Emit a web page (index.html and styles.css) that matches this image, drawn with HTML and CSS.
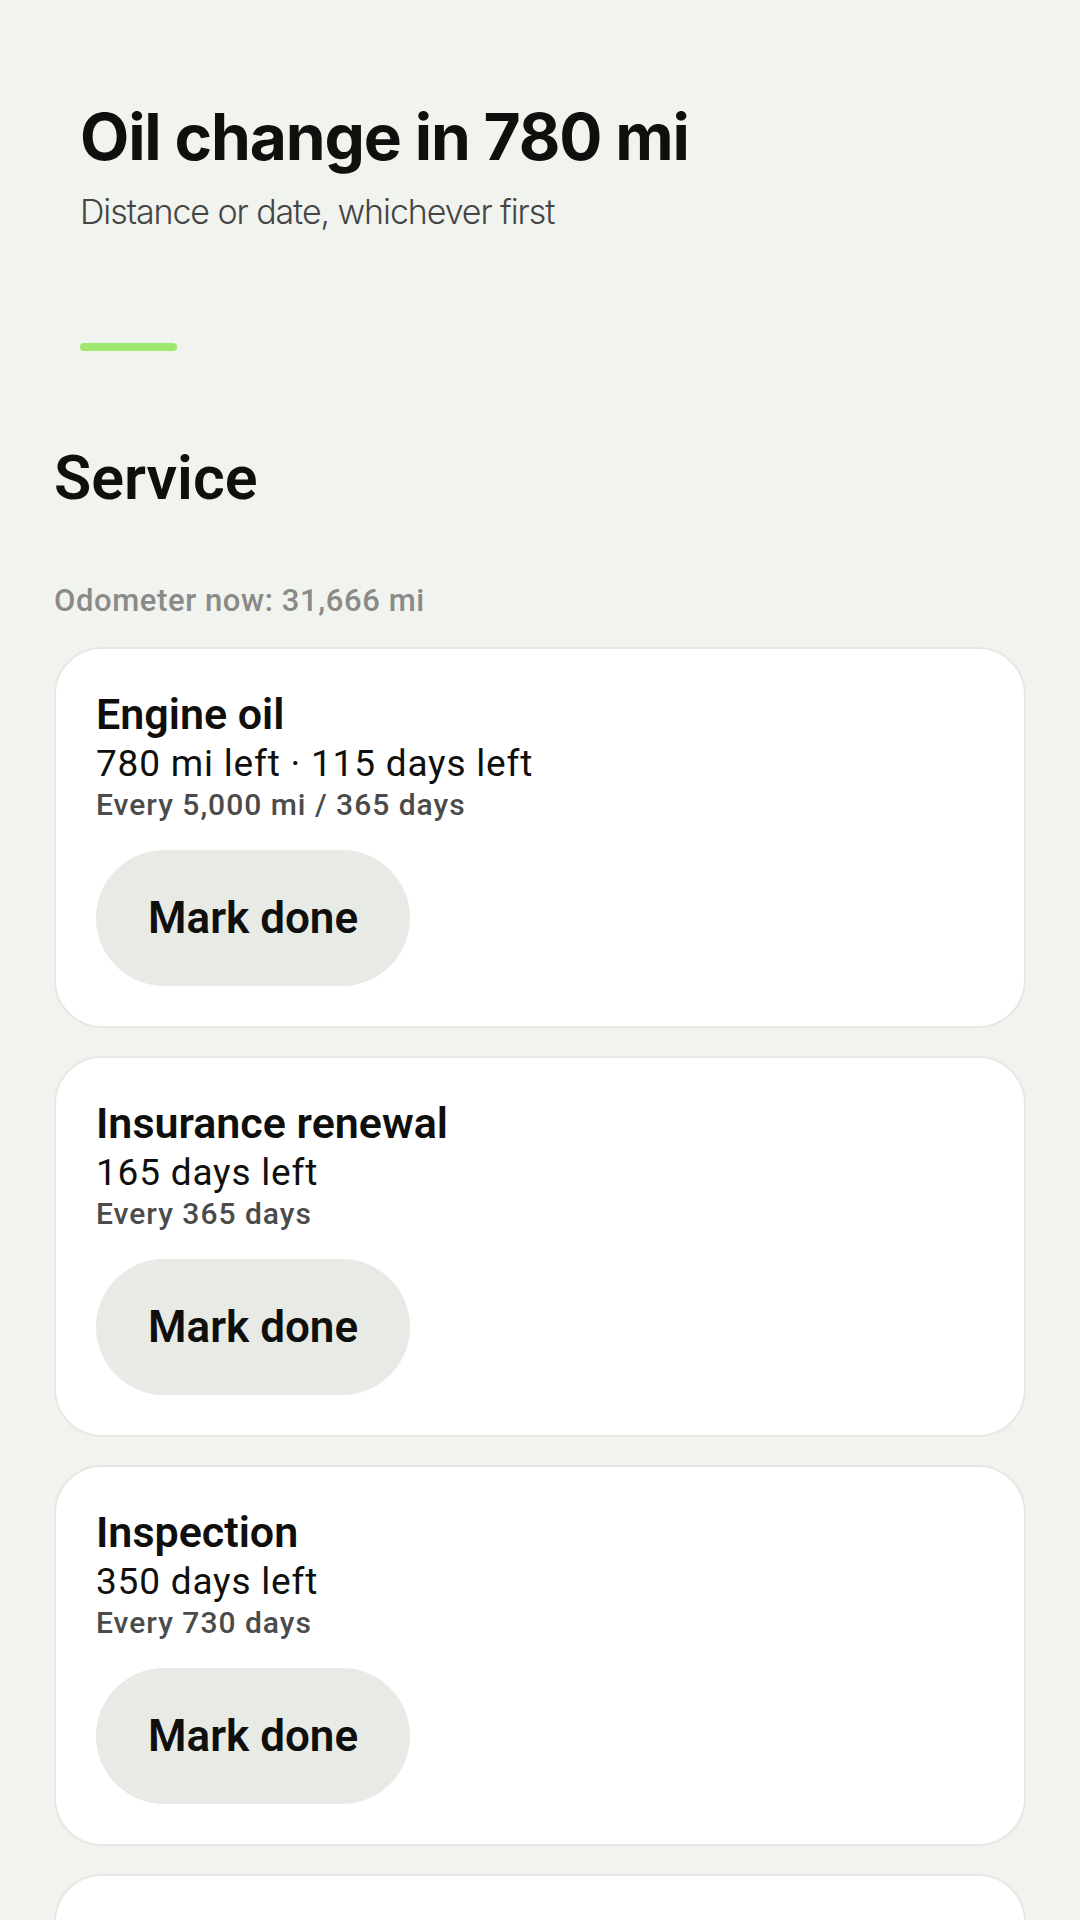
FILE: index.html
```html
<!DOCTYPE html>
<html lang="en">
<head>
  <meta charset="UTF-8" />
  <meta name="viewport" content="width=device-width, initial-scale=1.0" />
  <title>Service</title>
  <link rel="stylesheet" href="styles.css">
</head>
<body>
  <header class="hero">
    <h1>Oil change in 780 mi</h1>
    <p class="hero-sub">Distance or date, whichever first</p>
    <div class="hero-bar"></div>
  </header>

  <main class="service">
    <h2>Service</h2>
    <p class="odometer">Odometer now: 31,666 mi</p>

    <div class="card">
      <div class="card-title">Engine oil</div>
      <div class="card-left">780 mi left · 115 days left</div>
      <div class="card-every">Every 5,000 mi / 365 days</div>
      <button class="done-btn">Mark done</button>
    </div>

    <div class="card">
      <div class="card-title">Insurance renewal</div>
      <div class="card-left">165 days left</div>
      <div class="card-every">Every 365 days</div>
      <button class="done-btn">Mark done</button>
    </div>

    <div class="card">
      <div class="card-title">Inspection</div>
      <div class="card-left">350 days left</div>
      <div class="card-every">Every 730 days</div>
      <button class="done-btn">Mark done</button>
    </div>

    <!-- last card sits below the fold, only its top edge shows -->
    <div class="card card-empty"></div>
  </main>
</body>
</html>
```

FILE: styles.css
```css
body {
  margin: 0;
  padding: 0;
  background-color: #f1f3ef;
  color: #0f0f0d;
  font-family: Roboto, "Liberation Sans", sans-serif;
}

.hero {
  padding: 98px 80px 0;
}

.hero h1 {
  margin: 0;
  font-family: Inter, sans-serif;
  font-size: 64px;
  font-weight: 700;
  letter-spacing: -0.018em;
  line-height: normal;
}

.hero-sub {
  margin: 16px 0 0;
  font-family: Inter, sans-serif;
  font-size: 34px;
  font-weight: 300;
  letter-spacing: -0.032em;
  color: #454545;
  line-height: normal;
}

.hero-bar {
  width: 97px;
  height: 8px;
  margin-top: 111px;
  border-radius: 4px;
  background-color: #9fe870;
}

.service {
  padding: 91px 54px 0;
}

.service h2 {
  margin: 0;
  font-size: 61px;
  font-weight: 600;
  line-height: normal;
}

.odometer {
  margin: 68px 0 28px;
  font-size: 31px;
  font-weight: 500;
  letter-spacing: 0.6px;
  color: #8a8a88;
  line-height: normal;
}

.card {
  display: flex;
  flex-direction: column;
  align-items: flex-start;
  background-color: #fff;
  border: 2px solid #e6e8e3;
  border-radius: 48px;
  padding: 40px;
  margin-bottom: 28px;
}

.card-empty {
  height: 300px;
}

.card-title {
  font-size: 43px;
  font-weight: 600;
  line-height: normal;
}

.card-left {
  margin-top: 3px;
  font-size: 37px;
  letter-spacing: 0.8px;
  line-height: normal;
}

.card-every {
  margin-top: 2px;
  font-size: 30px;
  font-weight: 500;
  letter-spacing: 1px;
  color: #4b4b4b;
  line-height: normal;
}

.done-btn {
  margin-top: 28px;
  padding: 42px 52px;
  border: none;
  border-radius: 999px;
  background-color: #e8eae5;
  color: #0f0f0d;
  font-family: Roboto, "Liberation Sans", sans-serif;
  font-size: 44px;
  font-weight: 600;
  line-height: normal;
  cursor: pointer;
}
```
